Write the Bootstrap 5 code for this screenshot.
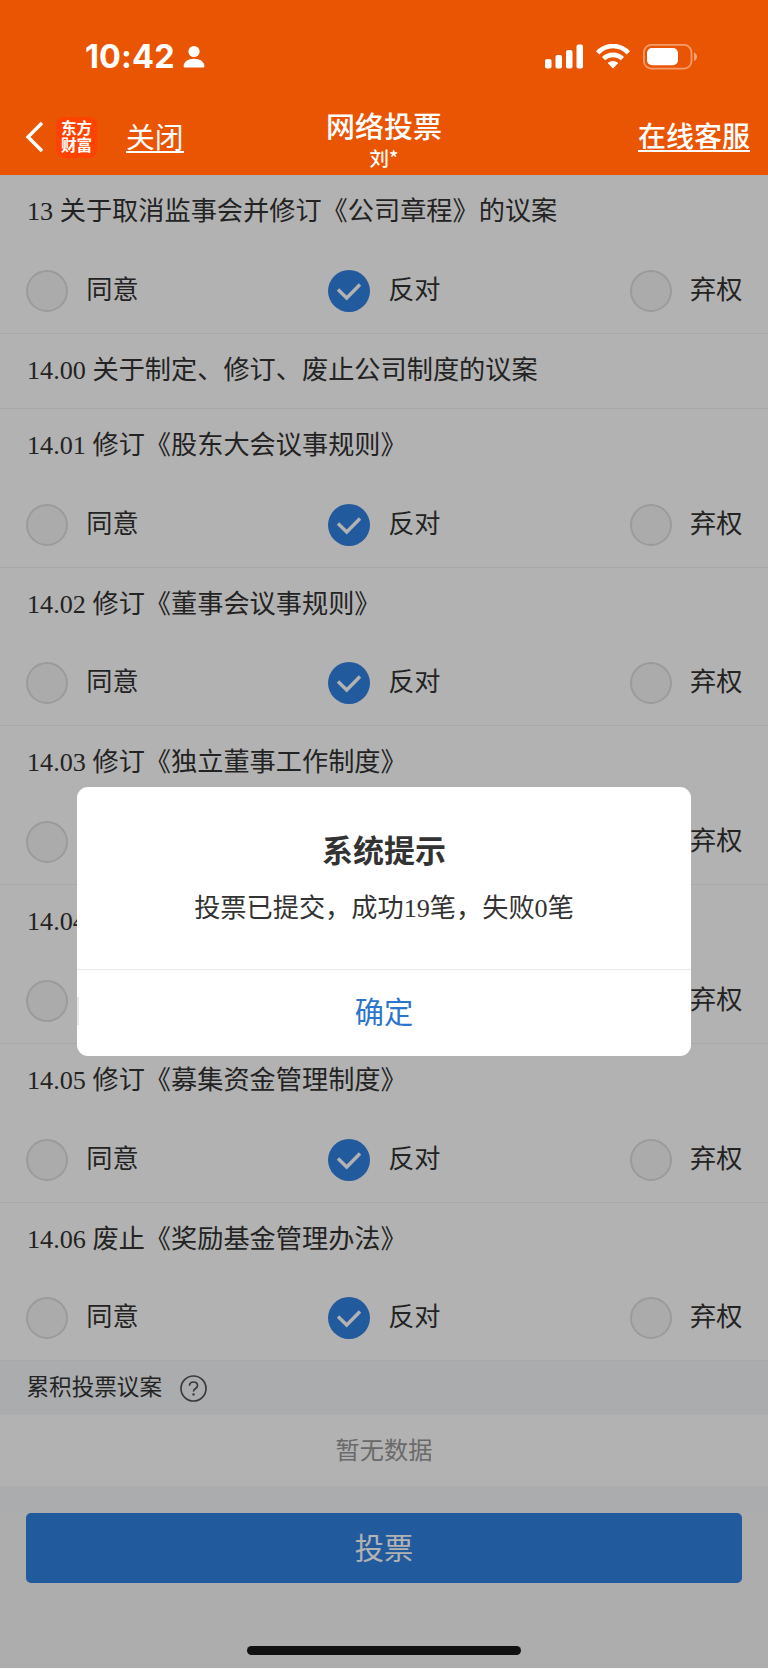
<!DOCTYPE html>
<html lang="zh-CN">
<head>
<meta charset="utf-8">
<meta name="viewport" content="width=device-width, initial-scale=1">
<title>网络投票</title>
<link rel="stylesheet" href="https://cdn.jsdelivr.net/npm/bootstrap@5.3.0/dist/css/bootstrap.min.css">
<style>
  body { width: 768px; height: 1669px; overflow: hidden; background: #f8f8f8; color: #333; font-family: "Liberation Serif", "Noto Sans CJK SC", sans-serif; font-size: 26.2px; }
  svg { display: block; flex: none; }
  .top-bar { height: 175px; background: #ea5503; color: #fff; font-family: "Noto Sans CJK SC", sans-serif; }
  .status-row { height: 99px; padding: 14px 71px 0 85px; }
  .clock { font: 700 32.4px/36px Inter, sans-serif; letter-spacing: .15px; padding-top: 1px; }
  .nav-row { height: 76px; padding: 0 18px 0 25px; }
  .nav-side { flex: 1 1 0; }
  .nav-row a { color: #fff; text-decoration: none; border-bottom: 2px solid #fff; line-height: 31px; margin-bottom: 2px; }
  .close-link { font-size: 28.8px; margin-left: 29px; }
  .help-link { font-size: 28px; font-weight: 500; }
  .nav-row .help-link { line-height: 30px; }
  .app-logo { width: 41px; height: 41px; border-radius: 8px; background: #ff4200; font-size: 15.6px; line-height: 17.5px; font-weight: 700; margin-left: 13px; text-align: center; padding-top: 2px; }
  .title-block { margin: 6px 0 0 -7px; }
  .page-title { font-size: 29px; line-height: 36px; font-weight: 500; }
  .page-user { font-size: 19.5px; line-height: 30px; font-weight: 500; }
  .vote-item { background: #fff; border-bottom: 1px solid #f1f2f3; }
  .vote-title { height: 74px; line-height: 74px; padding-left: 27px; white-space: nowrap; }
  .vote-options { height: 83.75px; padding: 0 25.6px 0 26.3px; }
  .vote-option { gap: 18px; line-height: 42px; }
  .dot { width: 42px; height: 42px; border-radius: 50%; border: 2px solid #dedede; background: #f5f5f5; }
  .section-head { height: 53.5px; background: #f5f7fa; padding-left: 26.5px; gap: 17.5px; font-size: 22.6px; }
  .no-data { height: 71px; line-height: 72px; background: #fff; color: #999; font-size: 24.2px; }
  .strip { height: 27px; background: #f5f7fa; }
  .vote-btn { display: block; width: 715.5px; height: 70px; margin: 0 auto; padding: 0; border: 0; border-radius: 5px; background: #3181e2; color: #fff; font-size: 29.2px; line-height: 72px; }
  .shade { top: 0; left: 0; right: 0; bottom: 1px; background: rgba(0,0,0,.3); }
  .content-area { height: 1494px; }
  .home-bar { left: 247px; top: 1645.5px; width: 274px; height: 9px; border-radius: 5px; background: #111; }
  .notice { left: 77px; top: 787px; width: 614px; height: 269px; border-radius: 11px; background: #fff; }
  .notice h2 { font-size: 31px; font-weight: 700; line-height: 42px; padding-top: 44px; margin: 0; }
  .notice p { line-height: 36px; margin: 18px 0 0; }
  .notice-body { height: 182px; }
  .notice-ok { height: 87px; width: 100%; border: 0; border-top: 1px solid #ebebeb; background: none; color: #2d74cb; font-size: 29.2px; padding: 0; line-height: 86px; }
  .notice-edge { left: 0; top: 210px; width: 2px; height: 28px; background: #e8e8e8; }
</style>
</head>
<body class="position-relative">
<header class="top-bar">
  <div class="status-row d-flex align-items-center">
    <span class="clock">10:42</span>
    <svg class="ms-2" width="22" height="24" viewBox="0 0 22 24" fill="#fff"><circle cx="11" cy="6.5" r="5.6"/><path d="M.6 21C.6 17 5 13.8 11 13.8S21.4 17 21.4 21c0 1-.5 1.6-1.6 1.6H2.2C1.100 22.600.6 22 .6 21Z"/></svg>
    <svg class="ms-auto" width="154" height="26" viewBox="0 0 154 26">
      <g fill="#fff"><rect x="2" y="15" width="6.500" height="9.500" rx="2"/><rect x="12.500" y="11" width="6.500" height="13.500" rx="2"/><rect x="23" y="6" width="6.500" height="18.500" rx="2"/><rect x="33.500" y="0.500" width="6.500" height="24" rx="2"/></g>
      <g fill="none" stroke="#fff" stroke-width="4.600"><path d="M54.700 8.900a20.500 20.500 0 0 1 30.600 0"/><path d="M60.600 14.700a13.400 13.400 0 0 1 18.800 0"/></g>
      <path d="M70 24.400l-5.300-5.300a8 8 0 0 1 10.600 0Z" fill="#fff"/>
      <rect x="100.900" y="0.900" width="47.600" height="23.700" rx="7.500" fill="none" stroke="#fff" stroke-opacity=".42" stroke-width="1.800"/>
      <rect x="104" y="4" width="31" height="17.300" rx="5" fill="#fff"/>
      <path d="M151 8.500q3 1.300 3 4.200t-3 4.200Z" fill="#fff" fill-opacity=".45"/>
    </svg>
  </div>
  <div class="nav-row d-flex align-items-center">
    <div class="nav-side d-flex align-items-center">
      <svg width="18" height="32" viewBox="0 0 18 32" fill="none" stroke="#fff" stroke-width="3.4"><path d="M17 2 3 16l14 14"/></svg>
      <div class="app-logo">东方<br>财富</div>
      <a href="#" class="close-link">关闭</a>
    </div>
    <div class="title-block text-center">
      <div class="page-title">网络投票</div>
      <div class="page-user">刘*</div>
    </div>
    <div class="nav-side d-flex justify-content-end"><a href="#" class="help-link">在线客服</a></div>
  </div>
</header>

<main class="content-area position-relative">
  <div id="votes"></div>
  <div class="section-head d-flex align-items-center">
    <span>累积投票议案</span>
    <svg width="27" height="27" viewBox="0 0 27 27" fill="none" stroke="#555"><circle cx="13.500" cy="13.500" r="12.500" stroke-width="1.700"/><path d="M9.500 10.700c.1-2.300 1.700-3.700 4-3.700s4 1.400 4 3.400c0 1.500-.8 2.400-2.200 3.300-1.300.8-1.800 1.400-1.800 2.800" stroke-width="1.700"/><circle cx="13.500" cy="19.400" r="1.200" fill="#555" stroke="none"/></svg>
  </div>
  <div class="no-data text-center">暂无数据</div>
  <div class="strip"></div>
  <button class="vote-btn" type="button">投票</button>
  <div class="shade position-absolute"></div>
</main>

<div class="home-bar position-absolute"></div>

<div class="notice position-absolute text-center" role="dialog">
  <div class="notice-body">
    <h2>系统提示</h2>
    <p>投票已提交，成功19笔，失败0笔</p>
  </div>
  <button type="button" class="notice-ok">确定</button>
  <div class="notice-edge position-absolute"></div>
</div>

<script>
  const items = [
    ['13 关于取消监事会并修订《公司章程》的议案', true],
    ['14.00 关于制定、修订、废止公司制度的议案', false],
    ['14.01 修订《股东大会议事规则》', true],
    ['14.02 修订《董事会议事规则》', true],
    ['14.03 修订《独立董事工作制度》', true],
    ['14.04', true],
    ['14.05 修订《募集资金管理制度》', true],
    ['14.06 废止《奖励基金管理办法》', true]
  ];
  const checked = '<svg width="42" height="42" viewBox="0 0 42 42"><circle cx="21" cy="21" r="21" fill="#3181e2"/><path d="M10 19.500 18.700 28 32 14.500" fill="none" stroke="#fff" stroke-width="3.400"/></svg>';
  const empty = '<div class="dot"></div>';
  const option = (mark, label) => `<div class="vote-option d-flex align-items-center">${mark}<span>${label}</span></div>`;
  document.getElementById('votes').innerHTML = items.map(([title, hasOptions]) =>
    `<section class="vote-item"><div class="vote-title">${title}</div>` +
    (hasOptions ? `<div class="vote-options d-flex align-items-center justify-content-between">${option(empty, '同意')}${option(checked, '反对')}${option(empty, '弃权')}</div>` : '') +
    '</section>').join('');
</script>
<script src="https://cdn.jsdelivr.net/npm/bootstrap@5.3.0/dist/js/bootstrap.bundle.min.js"></script>
</body>
</html>
